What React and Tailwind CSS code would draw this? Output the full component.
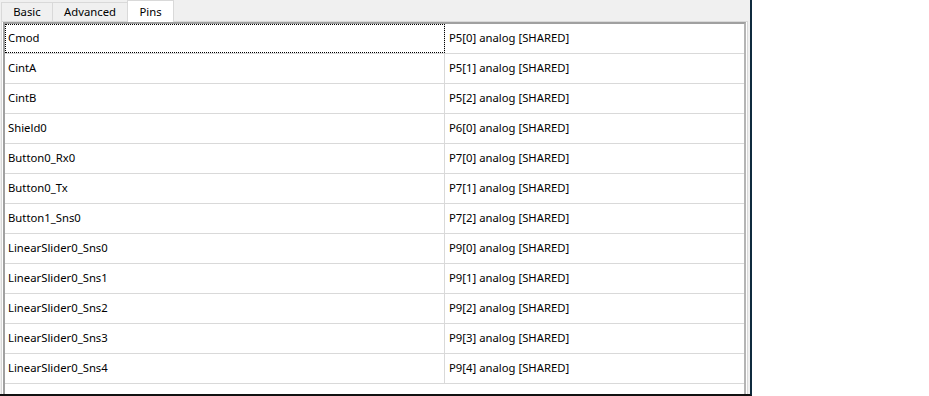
import React from "react";

const pins = [
  ["Cmod", "P5[0] analog [SHARED]"],
  ["CintA", "P5[1] analog [SHARED]"],
  ["CintB", "P5[2] analog [SHARED]"],
  ["Shield0", "P6[0] analog [SHARED]"],
  ["Button0_Rx0", "P7[0] analog [SHARED]"],
  ["Button0_Tx", "P7[1] analog [SHARED]"],
  ["Button1_Sns0", "P7[2] analog [SHARED]"],
  ["LinearSlider0_Sns0", "P9[0] analog [SHARED]"],
  ["LinearSlider0_Sns1", "P9[1] analog [SHARED]"],
  ["LinearSlider0_Sns2", "P9[2] analog [SHARED]"],
  ["LinearSlider0_Sns3", "P9[3] analog [SHARED]"],
  ["LinearSlider0_Sns4", "P9[4] analog [SHARED]"],
];

const tabs = [
  { label: "Basic", w: "w-[52px]" },
  { label: "Advanced", w: "w-[76px]" },
];

export default function App() {
  return (
    <div
      className="w-[929px] h-[396px] bg-white flex text-[11.3px] text-black"
      style={{ fontFamily: "'Noto Sans', 'Open Sans', sans-serif" }}
    >
      <div className="w-[752px] h-[396px] border-r-2 border-b-2 border-r-[#0f2a3d] border-b-[#111] bg-[#f0f0f0] flex flex-col">
        {/* tabs */}
        <div className="h-[21px] flex items-end pl-[1px] shrink-0">
          {tabs.map((t) => (
            <div
              key={t.label}
              className={`${t.w} h-[19px] border border-b-0 border-[#d9d9d9] -ml-[1px] first:ml-0 flex items-center justify-center leading-none`}
            >
              {t.label}
            </div>
          ))}
          <div className="w-[47px] h-[22px] -ml-[1px] -mb-[1px] bg-white border border-b-0 border-[#d9d9d9] flex items-center justify-center leading-none relative z-10">
            Pins
          </div>
        </div>

        {/* panel */}
        <div className="flex-1 ml-[1px] mr-[2px] border border-b-0 border-[#d9d9d9] bg-white px-[1px] flex">
          <div className="flex-1 border-t-2 border-l-2 border-r-2 border-t-[#a0a0a0] border-l-[#a0a0a0] border-r-[#b4b4b4] bg-white">
            {pins.map(([name, pin], i) => (
              <div key={name} className="h-[30px] flex border-b border-[#d9d9d9]">
                <div
                  className={`w-[440px] border-r border-[#d9d9d9] flex items-center pl-[3px] ${
                    i === 0 ? "outline outline-1 outline-dotted outline-black -outline-offset-1" : ""
                  }`}
                >
                  {name}
                </div>
                <div className="flex-1 flex items-center pl-[4px]">{pin}</div>
              </div>
            ))}
          </div>
        </div>
      </div>
    </div>
  );
}
